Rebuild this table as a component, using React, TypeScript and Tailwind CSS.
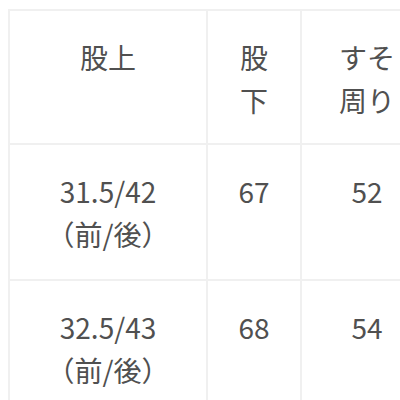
import React from "react";

const rows = [
  { rise: "31.5/42", inseam: "67", hem: "52" },
  { rise: "32.5/43", inseam: "68", hem: "54" },
];

const cell = "border-2 border-[#f0f0f0] px-6 pt-[25px] align-top text-center font-normal";

export default function App() {
  return (
    <div className="w-[400px] h-[400px] overflow-hidden bg-white pt-[9px] pl-[8px]">
      <table
        className="w-[424px] table-fixed border-collapse text-[28px] leading-[43px] text-[#505050]"
        style={{ fontFamily: '"Noto Sans CJK JP", "Noto Sans", sans-serif' }}
      >
        <colgroup>
          <col className="w-[198px]" />
          <col className="w-[94px]" />
          <col className="w-[132px]" />
        </colgroup>
        <thead>
          <tr className="h-[134px]">
            <th className={cell}>股上</th>
            <th className={cell}>
              股<br />下
            </th>
            <th className={cell}>
              すそ<br />周り
            </th>
          </tr>
        </thead>
        <tbody>
          {rows.map((r) => (
            <tr key={r.rise} className="h-[136px]">
              <td className={cell}>
                {r.rise}
                <br />
                （前/後）
              </td>
              <td className={cell}>{r.inseam}</td>
              <td className={cell}>{r.hem}</td>
            </tr>
          ))}
        </tbody>
      </table>
    </div>
  );
}
